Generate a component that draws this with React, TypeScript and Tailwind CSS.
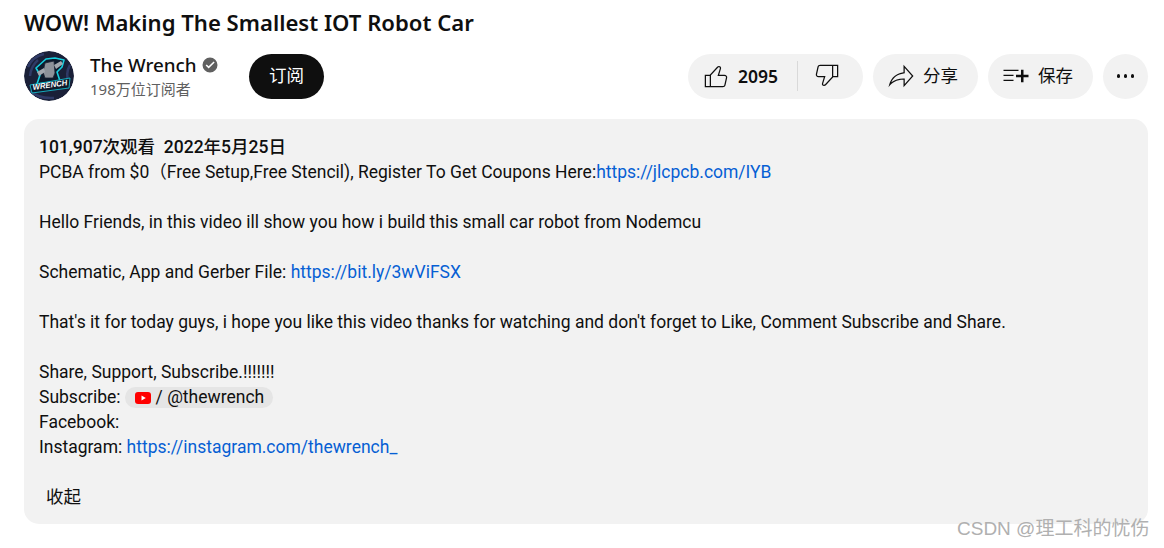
import React from 'react';

const ROBOTO = "font-['Roboto','Noto_Sans_CJK_SC',sans-serif]";

const Icon: React.FC<{ d: string; className?: string }> = ({ d, className }) => (
  <svg viewBox="0 0 24 24" className={className} fill="currentColor">
    <path d={d} />
  </svg>
);

const LIKE =
  'M18.77,11h-4.23l1.52-4.94C16.38,5.03,15.54,4,14.38,4c-0.58,0-1.14,0.24-1.52,0.65L7,11H3v10h4h1h9.43c1.06,0,1.98-0.67,2.19-1.61l1.34-6C21.23,12.15,20.18,11,18.77,11z M7,20H4v-8h3V20z M19.98,13.17l-1.34,6C18.54,19.65,18.03,20,17.43,20H8v-8.61l5.6-6.06C13.79,5.12,14.08,5,14.38,5c0.26,0,0.5,0.11,0.63,0.3c0.07,0.1,0.15,0.26,0.09,0.47l-1.52,4.94L13.18,12h1.35h4.23c0.41,0,0.8,0.17,1.03,0.46C19.92,12.61,20.05,12.86,19.98,13.17z';
const SHARE =
  'M15,5.63L20.66,12L15,18.37V14h-1c-3.96,0-7.14,1-9.75,3.09c1.84-4.07,5.11-6.4,9.89-7.1L15,9.86V5.63 M14,3v6C6.22,10.13,3.11,15.33,2,21c2.78-3.97,6.44-6,12-6v6l8-9L14,3L14,3z';
const SAVE = 'M22,13h-4v4h-2v-4h-4v-2h4V7h2v4h4V13z M14,7H2v1h12V7z M2,12h8v-1H2V12z M2,16h8v-1H2V16z';

const Avatar = () => (
  <svg viewBox="0 0 50 50" className="h-[50px] w-[50px] shrink-0 rounded-full">
    <circle cx="25" cy="25" r="25" fill="#1a2038" />
    <path d="M4 16 Q8 6 20 3 M6 25 Q7 15 14 9 M46 14 Q41 22 45 34 M6 40 Q15 48 30 47" stroke="#2f3a66" strokeWidth="2.500" fill="none" />
    <path d="M12 17 L22 8 L31 7 L40 9 L38 16 L33 21 L36 30 L13 33 L16 24 Z" fill="#0d1a2c" stroke="#16cfdf" strokeWidth="1.600" strokeLinejoin="round" />
    <path d="M21 12 L30 10 L31 22 L29 27 L21 27 L19 21 Z" fill="#8d929a" stroke="#1a2234" strokeWidth="0.800" />
    <path d="M13 21 L20 17 L21 21 L15 25 Z M30 14 L37 10 L39 13 L32 18 Z" fill="#a3a8af" />
    <path d="M6 34 L46 27 L45 37 L8 42 Z" fill="#0d1a2c" stroke="#16cfdf" strokeWidth="0.800" strokeLinejoin="round" />
    <text x="9" y="39" transform="rotate(-8 9 39)" fontSize="8" fontWeight="700" fontStyle="italic" fill="#ffffff" fontFamily="Liberation Sans, sans-serif" textLength="35" lengthAdjust="spacingAndGlyphs">WRENCH</text>
  </svg>
);

const PillButton: React.FC<{ d: string; label: string; iconMargin: string }> = ({ d, label, iconMargin }) => (
  <button className={`flex h-[45px] w-[105px] items-center rounded-full bg-[#f2f2f2] text-[17.5px] text-[#0f0f0f] ${iconMargin}`}>
    <Icon d={d} className="h-[30px] w-[30px] shrink-0" />
    <span className="ml-[7px] whitespace-nowrap">{label}</span>
  </button>
);

const Link: React.FC<{ children: React.ReactNode }> = ({ children }) => (
  <a className="text-[#065fd4]">{children}</a>
);

export default function App() {
  return (
    <div className={`relative h-[548px] w-[1164px] overflow-hidden bg-white pl-[24px] pr-[16px] text-[#0f0f0f] ${ROBOTO}`}>
      <h1 className="flex h-[46px] items-center text-[22.1px] font-semibold font-['Noto_Sans','Noto_Sans_CJK_SC',sans-serif]">
        WOW! Making The Smallest IOT Robot Car
      </h1>

      <div className="mt-[5px] flex h-[50px] items-center justify-between">
        <div className="flex items-center">
          <Avatar />
          <div className="ml-[16px] w-[143px]">
            <div className="mb-[4px] flex items-center">
              <span className="text-[18.8px] leading-[22px] font-medium font-['Noto_Sans',sans-serif]">The Wrench</span>
              <svg viewBox="0 0 24 24" className="ml-[4px] h-[18px] w-[18px] text-[#606060]" fill="currentColor">
                <path d="M12 2a10 10 0 1 0 0 20 10 10 0 0 0 0-20zm-1.800 14.600-4-4 1.400-1.400 2.600 2.600 6.600-6.600 1.400 1.400-8 8z" />
              </svg>
            </div>
            <div className="text-[15px] leading-[18px] text-[#606060] font-['Noto_Sans','Noto_Sans_CJK_SC',sans-serif]">198万位订阅者</div>
          </div>
          <button className="ml-[16px] h-[45px] w-[75px] rounded-full bg-[#0f0f0f] text-[17.5px] text-white">订阅</button>
        </div>

        <div className="flex items-center gap-[10px]">
          <div className="flex h-[45px] w-[175px] items-center rounded-full bg-[#f2f2f2]">
            <Icon d={LIKE} className="ml-[13px] h-[30px] w-[30px] shrink-0" />
            <span className="ml-[7px] w-[59px] text-[17.5px] font-semibold font-['Noto_Sans',sans-serif]">2095</span>
            <span className="h-[30px] w-px bg-[#d9d9d9]" />
            <Icon d={LIKE} className="ml-[14px] h-[30px] w-[30px] shrink-0 rotate-180" />
          </div>
          <PillButton d={SHARE} label="分享" iconMargin="pl-[13px]" />
          <PillButton d={SAVE} label="保存" iconMargin="pl-[13px]" />
          <button className="flex h-[45px] w-[45px] items-center justify-center gap-[3.5px] rounded-full bg-[#f2f2f2]">
            <span className="h-[3.6px] w-[3.6px] rounded-full bg-[#0f0f0f]" />
            <span className="h-[3.6px] w-[3.6px] rounded-full bg-[#0f0f0f]" />
            <span className="h-[3.6px] w-[3.6px] rounded-full bg-[#0f0f0f]" />
          </button>
        </div>
      </div>

      <div className="mt-[18px] h-[405px] w-[1124px] rounded-[15px] bg-[#f2f2f2] px-[15px] pt-[16px] text-[17.5px] leading-[25px]">
        <div className="font-medium">101,907次观看&nbsp;&nbsp;2022年5月25日</div>
        <div>PCBA from $0（Free Setup,Free Stencil), Register To Get Coupons Here:<Link>https://jlcpcb.com/IYB</Link></div>
        <div className="h-[25px]" />
        <div>Hello Friends, in this video ill show you how i build this small car robot from Nodemcu</div>
        <div className="h-[25px]" />
        <div>Schematic, App and Gerber File: <Link>https://bit.ly/3wViFSX</Link></div>
        <div className="h-[25px]" />
        <div>That's it for today guys, i hope you like this video thanks for watching and don't forget to Like, Comment Subscribe and Share.</div>
        <div className="h-[25px]" />
        <div>Share, Support, Subscribe.!!!!!!!</div>
        <div className="flex items-center">
          <span>Subscribe:</span>
          <span className="ml-[4px] flex h-[21px] items-center rounded-full bg-[#e5e5e5] px-[9px]">
            <svg viewBox="0 0 16 12" className="ml-[1px] h-[12px] w-[16px]">
              <rect width="16" height="12" rx="3" fill="#ff0000" />
              <path d="M6.500 3.500 10.800 6 6.500 8.500z" fill="#ffffff" />
            </svg>
            <span className="ml-[5px]">/ @thewrench</span>
          </span>
        </div>
        <div>Facebook:</div>
        <div>Instagram: <Link>https://instagram.com/thewrench_</Link></div>
        <div className="h-[25px]" />
        <div className="pl-[7px]">收起</div>
      </div>

      <div className="absolute left-[957px] top-[517px] text-[19px] leading-[24px] text-[#b0b0b0] font-['Liberation_Sans','Noto_Sans_CJK_SC',sans-serif]">
        CSDN @理工科的忧伤
      </div>
    </div>
  );
}
